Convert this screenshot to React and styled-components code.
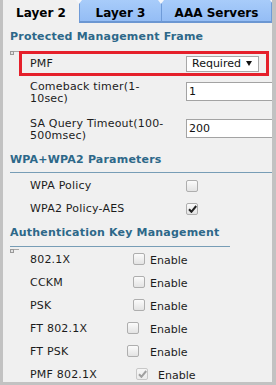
import React from 'react';
import styled, { createGlobalStyle, css } from 'styled-components';

const Global = createGlobalStyle`
  html, body { margin: 0; padding: 0; }
  body {
    width: 276px; height: 385px; overflow: hidden; background: #c2c2c2;
    font-family: "DejaVu Sans", Verdana, sans-serif;
  }
`;

const Frame = styled.div`
  width: 276px; height: 385px; box-sizing: border-box;
  padding: 0 4px 3px 3px; background: #c2c2c2; display: flex;
`;

const Panel = styled.div`
  flex: 1; min-width: 0; background: #f0f0f0; overflow: hidden;
  display: flex; flex-direction: column;
`;

const TabBar = styled.div`
  display: flex; height: 23px; flex: none;
`;

const Tab = styled.div`
  box-sizing: border-box; height: 23px; width: ${p => p.$w}px; flex: none;
  padding-top: 3px; text-align: center; color: #000; position: relative;
  font: bold 12px/20px "DejaVu Sans", Verdana, sans-serif;
  ${p => p.$active ? css`
    background: #f0f0f0;
  ` : css`
    background: linear-gradient(#a8ccfa, #94bdf5);
    border-bottom: 2px solid #6c97d2;
    border-left: 1px solid #6f9bd8;
    &::before {
      content: ""; position: absolute; top: 0; left: -4px;
      border-top: 4px solid #f4f6fa; border-left: 3px solid transparent; border-right: 3px solid transparent;
    }
  `}
  ${p => p.$last && css`
    border-right: 1px solid #6f9bd8;
    &::after {
      content: ""; position: absolute; top: 0; right: -2px;
      border-top: 4px solid #f4f6fa; border-left: 3px solid transparent;
    }
  `}
`;

const Content = styled.div`
  display: flex; flex-direction: column; padding-left: 7px;
`;

const Section = styled.section`
  display: flex; flex-direction: column; margin-top: ${p => p.$top}px;
`;

const Heading = styled.h3`
  margin: 0; font: bold 11px/14px "DejaVu Sans", Verdana, sans-serif;
  letter-spacing: 0.2px; color: #2d6889;
`;

const Rule = styled.div`
  height: 1px; margin-top: ${p => p.$gap}px;
  width: ${p => (p.$w ? `${p.$w}px` : 'auto')};
  background: ${p => (p.$hidden ? 'transparent' : '#779db6')};
`;

const Body = styled.div`
  position: relative; display: flex; flex-direction: column;
  margin-top: ${p => p.$top}px;
`;

const MarkerIcon = styled.svg`
  position: absolute; left: 0; top: 1px;
`;

const Marker = () => (
  <MarkerIcon width="9" height="4" viewBox="0 0 9 4">
    <rect x="0.5" y="0.5" width="3" height="3" fill="#e2e2e2" stroke="#9a9a9a" strokeWidth="1" />
    <line x1="4" y1="0.5" x2="9" y2="0.5" stroke="#a8a8a8" strokeWidth="1" />
  </MarkerIcon>
);

const HighlightRow = styled.div`
  box-sizing: border-box; height: 25px; margin: 1px 3px 0 9px;
  border: 3px solid #e5202b; padding-left: 8px;
  display: grid; grid-template-columns: 156px 1fr; align-items: center;
`;

const Label = styled.span`
  font: 11px/14px "DejaVu Sans", Verdana, sans-serif; letter-spacing: 0.2px; color: #1c1c1c;
  white-space: nowrap;
`;

const FieldRow = styled.div`
  height: 25px; margin-top: ${p => p.$top}px; padding-left: 20px;
  display: grid; grid-template-columns: 156px 1fr; align-items: start;
`;

const FieldLabel = styled.span`
  font: 11px/12px "DejaVu Sans", Verdana, sans-serif; letter-spacing: 0.2px; color: #1c1c1c;
  margin-top: -1px;
`;

const TextInput = styled.div`
  box-sizing: border-box; width: 100px; height: 19px; background: #fff;
  border: 1px solid #a3a3a3; padding: 0 2px;
  font: 11px/17px "DejaVu Sans", Verdana, sans-serif; color: #111;
`;

const Select = styled.div`
  box-sizing: border-box; width: 73px; height: 16px; background: #fff;
  border: 1px solid #a8a8a8; padding-left: 5px;
  display: flex; align-items: center; gap: 5px;
  font: 11px/14px "DejaVu Sans", Verdana, sans-serif; color: #111;
`;

const CheckRow = styled.div`
  height: 23px; padding-left: 20px;
  display: grid; grid-template-columns: 156px auto; align-items: center;
  justify-items: start;
`;

const AuthRow = styled.div`
  height: 23px; padding-left: 20px; display: flex; align-items: center;
`;

const AuthLabel = styled(Label)`
  width: ${p => p.$w}px; flex: none;
`;

const Box = styled.span`
  box-sizing: border-box; width: 12px; height: 12px; flex: none;
  border-radius: 2px; display: flex; align-items: center; justify-content: center;
  border: 1px solid ${p => (p.$disabled ? '#c8c8c8' : '#aeaeae')};
  background: ${p => (p.$disabled ? 'linear-gradient(#f6f6f6, #ececec)' : 'linear-gradient(#fbfbfb, #e3e3e3)')};
  margin-bottom: ${p => (p.$raise ? p.$raise * 2 : 0)}px;
`;

const Enable = styled.span`
  font: 11px/14px "DejaVu Sans", Verdana, sans-serif; color: #1c1c1c;
  margin-left: ${p => p.$gap}px; padding-top: 2px;
`;

const Checkbox = ({ checked, disabled, raise }) => (
  <Box $disabled={disabled} $raise={raise}>
    {checked && (
      <svg width="9" height="8" viewBox="0 0 9 8">
        <path d="M1 4.3 L3.4 6.8 L8.2 1" fill="none" stroke={disabled ? '#a0a0a0' : '#222'} strokeWidth="2" />
      </svg>
    )}
  </Box>
);

const authRows = [
  { label: '802.1X', cb: 133, en: 150 },
  { label: 'CCKM', cb: 133, en: 150 },
  { label: 'PSK', cb: 133, en: 150 },
  { label: 'FT 802.1X', cb: 127, en: 150 },
  { label: 'FT PSK', cb: 127, en: 150 },
  { label: 'PMF 802.1X', cb: 136, en: 158, checked: true, disabled: true },
];

export default function App() {
  return (
    <>
      <Global />
      <Frame>
        <Panel>
          <TabBar>
            <Tab $active $w={76}>Layer 2</Tab>
            <Tab $w={82}>Layer 3</Tab>
            <Tab $w={111} $last>AAA Servers</Tab>
          </TabBar>
          <Content>
            <Section $top={7}>
              <Heading>Protected Management Frame</Heading>
              <Rule $gap={5} $hidden />
              <Body $top={0}>
                <Marker />
                <HighlightRow>
                  <Label>PMF</Label>
                  <Select>
                    <span>Required</span>
                    <svg width="6" height="5" viewBox="0 0 6 5">
                      <polygon points="0,0 6,0 3,5" fill="#111" />
                    </svg>
                  </Select>
                </HighlightRow>
                <FieldRow $top={6}>
                  <FieldLabel>Comeback timer(1-<br />10sec)</FieldLabel>
                  <TextInput>1</TextInput>
                </FieldRow>
                <FieldRow $top={12}>
                  <FieldLabel>SA Query Timeout(100-<br />500msec)</FieldLabel>
                  <TextInput>200</TextInput>
                </FieldRow>
              </Body>
            </Section>
            <Section $top={9}>
              <Heading>WPA+WPA2 Parameters</Heading>
              <Rule $gap={5} />
              <Body $top={1}>
                <CheckRow>
                  <Label>WPA Policy</Label>
                  <Checkbox />
                </CheckRow>
                <CheckRow>
                  <Label>WPA2 Policy-AES</Label>
                  <Checkbox checked />
                </CheckRow>
              </Body>
            </Section>
            <Section $top={6}>
              <Heading>Authentication Key Management</Heading>
              <Rule $gap={6} $w={220} />
              <Body $top={1}>
                <Marker />
                {authRows.map(r => (
                  <AuthRow key={r.label}>
                    <AuthLabel $w={r.cb - 30}>{r.label}</AuthLabel>
                    <Checkbox checked={r.checked} disabled={r.disabled} raise={1} />
                    <Enable $gap={r.en - r.cb - 12}>Enable</Enable>
                  </AuthRow>
                ))}
              </Body>
            </Section>
          </Content>
        </Panel>
      </Frame>
    </>
  );
}
